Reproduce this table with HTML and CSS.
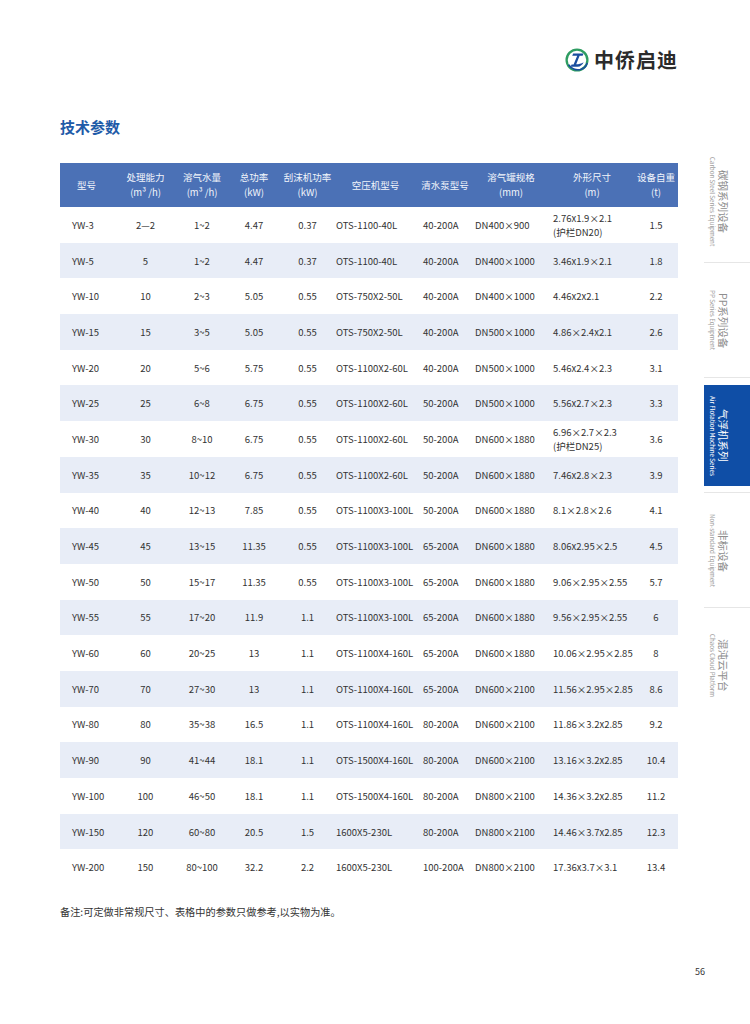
FILE: index.html
```html
<!DOCTYPE html>
<html lang="zh-CN">
<head>
<meta charset="utf-8">
<title>技术参数</title>
<link rel="stylesheet" href="styles.css">
</head>
<body>
<div class="page">
  <main class="main">
    <header class="brand">
      <svg class="brand-icon" width="24" height="24" viewBox="0 0 24 24" aria-hidden="true">
        <path d="M12 1.6 A10.4 10.4 0 1 0 22.4 12" fill="none" stroke="#2f9d62" stroke-width="2.3"/>
        <path d="M22.4 12 A10.4 10.4 0 0 0 12 1.6" fill="none" stroke="#2f9d62" stroke-width="2.3"/>
        <path d="M8.2 5.6 L18.6 5.6 L17.6 7.8 L14.6 7.8 L11.2 16.2 C13.6 16.2 16.4 15.6 18.6 14.2 C17.6 16.6 15.4 18.6 12.4 18.8 L5.6 18.8 L6.6 16.4 L8.6 16.4 L12.2 7.8 L7.2 7.8 Z" fill="#1a4d9e"/>
        <path d="M3.6 16.8 C6 20.6 11 22.6 15.6 21.4 C19 20.4 21.4 17.8 22.2 15" fill="none" stroke="#1a4d9e" stroke-width="1.6"/>
      </svg>
      <span class="brand-name">中侨启迪</span>
    </header>

    <h1 class="title">技术参数</h1>

    <table class="spec">
      <colgroup>
        <col class="w1"><col class="w2"><col class="w3"><col class="w4"><col class="w5">
        <col class="w6"><col class="w7"><col class="w8"><col class="w9"><col class="w10">
      </colgroup>
      <thead>
        <tr>
          <th>型号</th>
          <th>处理能力<br>(m³ /h)</th>
          <th>溶气水量<br>(m³ /h)</th>
          <th>总功率<br>(kW)</th>
          <th>刮沫机功率<br>(kW)</th>
          <th>空压机型号</th>
          <th>清水泵型号</th>
          <th>溶气罐规格<br>(mm)</th>
          <th>外形尺寸<br>(m)</th>
          <th>设备自重<br>(t)</th>
        </tr>
      </thead>
      <tbody>
        <tr><td class="c1">YW-3</td><td>2—2</td><td>1~2</td><td>4.47</td><td>0.37</td><td class="l3">OTS-1100-40L</td><td class="l5">40-200A</td><td class="l3">DN400×900</td><td class="l3">2.76x1.9×2.1<br>(护栏DN20)</td><td>1.5</td></tr>
        <tr><td class="c1">YW-5</td><td>5</td><td>1~2</td><td>4.47</td><td>0.37</td><td class="l3">OTS-1100-40L</td><td class="l5">40-200A</td><td class="l3">DN400×1000</td><td class="l3">3.46x1.9×2.1</td><td>1.8</td></tr>
        <tr><td class="c1">YW-10</td><td>10</td><td>2~3</td><td>5.05</td><td>0.55</td><td class="l3">OTS-750X2-50L</td><td class="l5">40-200A</td><td class="l3">DN400×1000</td><td class="l3">4.46x2x2.1</td><td>2.2</td></tr>
        <tr><td class="c1">YW-15</td><td>15</td><td>3~5</td><td>5.05</td><td>0.55</td><td class="l3">OTS-750X2-50L</td><td class="l5">40-200A</td><td class="l3">DN500×1000</td><td class="l3">4.86×2.4x2.1</td><td>2.6</td></tr>
        <tr><td class="c1">YW-20</td><td>20</td><td>5~6</td><td>5.75</td><td>0.55</td><td class="l3">OTS-1100X2-60L</td><td class="l5">40-200A</td><td class="l3">DN500×1000</td><td class="l3">5.46x2.4×2.3</td><td>3.1</td></tr>
        <tr><td class="c1">YW-25</td><td>25</td><td>6~8</td><td>6.75</td><td>0.55</td><td class="l3">OTS-1100X2-60L</td><td class="l5">50-200A</td><td class="l3">DN500×1000</td><td class="l3">5.56x2.7×2.3</td><td>3.3</td></tr>
        <tr><td class="c1">YW-30</td><td>30</td><td>8~10</td><td>6.75</td><td>0.55</td><td class="l3">OTS-1100X2-60L</td><td class="l5">50-200A</td><td class="l3">DN600×1880</td><td class="l3">6.96×2.7×2.3<br>(护栏DN25)</td><td>3.6</td></tr>
        <tr><td class="c1">YW-35</td><td>35</td><td>10~12</td><td>6.75</td><td>0.55</td><td class="l3">OTS-1100X2-60L</td><td class="l5">50-200A</td><td class="l3">DN600×1880</td><td class="l3">7.46x2.8×2.3</td><td>3.9</td></tr>
        <tr><td class="c1">YW-40</td><td>40</td><td>12~13</td><td>7.85</td><td>0.55</td><td class="l3">OTS-1100X3-100L</td><td class="l5">50-200A</td><td class="l3">DN600×1880</td><td class="l3">8.1×2.8×2.6</td><td>4.1</td></tr>
        <tr><td class="c1">YW-45</td><td>45</td><td>13~15</td><td>11.35</td><td>0.55</td><td class="l3">OTS-1100X3-100L</td><td class="l5">65-200A</td><td class="l3">DN600×1880</td><td class="l3">8.06x2.95×2.5</td><td>4.5</td></tr>
        <tr><td class="c1">YW-50</td><td>50</td><td>15~17</td><td>11.35</td><td>0.55</td><td class="l3">OTS-1100X3-100L</td><td class="l5">65-200A</td><td class="l3">DN600×1880</td><td class="l3">9.06×2.95×2.55</td><td>5.7</td></tr>
        <tr><td class="c1">YW-55</td><td>55</td><td>17~20</td><td>11.9</td><td>1.1</td><td class="l3">OTS-1100X3-100L</td><td class="l5">65-200A</td><td class="l3">DN600×1880</td><td class="l3">9.56×2.95×2.55</td><td>6</td></tr>
        <tr><td class="c1">YW-60</td><td>60</td><td>20~25</td><td>13</td><td>1.1</td><td class="l3">OTS-1100X4-160L</td><td class="l5">65-200A</td><td class="l3">DN600×1880</td><td class="l3">10.06×2.95×2.85</td><td>8</td></tr>
        <tr><td class="c1">YW-70</td><td>70</td><td>27~30</td><td>13</td><td>1.1</td><td class="l3">OTS-1100X4-160L</td><td class="l5">65-200A</td><td class="l3">DN600×2100</td><td class="l3">11.56×2.95×2.85</td><td>8.6</td></tr>
        <tr><td class="c1">YW-80</td><td>80</td><td>35~38</td><td>16.5</td><td>1.1</td><td class="l3">OTS-1100X4-160L</td><td class="l5">80-200A</td><td class="l3">DN600×2100</td><td class="l3">11.86×3.2x2.85</td><td>9.2</td></tr>
        <tr><td class="c1">YW-90</td><td>90</td><td>41~44</td><td>18.1</td><td>1.1</td><td class="l3">OTS-1500X4-160L</td><td class="l5">80-200A</td><td class="l3">DN600×2100</td><td class="l3">13.16×3.2x2.85</td><td>10.4</td></tr>
        <tr><td class="c1">YW-100</td><td>100</td><td>46~50</td><td>18.1</td><td>1.1</td><td class="l3">OTS-1500X4-160L</td><td class="l5">80-200A</td><td class="l3">DN800×2100</td><td class="l3">14.36×3.2x2.85</td><td>11.2</td></tr>
        <tr><td class="c1">YW-150</td><td>120</td><td>60~80</td><td>20.5</td><td>1.5</td><td class="l3">1600X5-230L</td><td class="l5">80-200A</td><td class="l3">DN800×2100</td><td class="l3">14.46×3.7x2.85</td><td>12.3</td></tr>
        <tr><td class="c1">YW-200</td><td>150</td><td>80~100</td><td>32.2</td><td>2.2</td><td class="l3">1600X5-230L</td><td class="l5">100-200A</td><td class="l3">DN800×2100</td><td class="l3">17.36x3.7×3.1</td><td>13.4</td></tr>
      </tbody>
    </table>

    <p class="note">备注:可定做非常规尺寸、表格中的参数只做参考,以实物为准。</p>
  </main>

  <nav class="side">
    <div class="tab first"><div class="tab-box"><span class="zh">碳钢系列设备</span><span class="en">Carbon Steel Series Equipment</span></div></div>
    <div class="tab"><div class="tab-box"><span class="zh">PP系列设备</span><span class="en">PP Series Equipment</span></div></div>
    <div class="tab"><div class="tab-box active"><span class="zh">气浮机系列</span><span class="en">Air Flotation Machine Series</span></div></div>
    <div class="tab"><div class="tab-box"><span class="zh">非标设备</span><span class="en">Non-standard Equipment</span></div></div>
    <div class="tab"><div class="tab-box"><span class="zh">混沌云平台</span><span class="en">Chaos Cloud Platform</span></div></div>
  </nav>

  <footer class="footer">56</footer>
</div>
</body>
</html>
```

FILE: styles.css
```css
* { box-sizing: border-box; }

html, body {
  margin: 0;
  padding: 0;
  background: #ffffff;
}

body {
  font-family: "Noto Sans CJK SC", "Noto Sans", "Liberation Sans", sans-serif;
  color: #333333;
}

.page {
  width: 750px;
  display: grid;
  grid-template-columns: 704px 46px;
  grid-template-rows: auto auto;
}

.main {
  padding: 48px 26px 0 60px;
}

.brand {
  display: flex;
  justify-content: flex-end;
  align-items: center;
  gap: 5px;
  height: 24px;
}

.brand-icon {
  display: block;
  flex: none;
}

.brand-name {
  font-size: 20px;
  line-height: 24px;
  font-weight: 700;
  color: #2b2b2b;
  letter-spacing: 1px;
}

.title {
  margin: 45px 0 0;
  font-size: 15px;
  line-height: 20px;
  font-weight: 700;
  color: #1f5ba8;
}

.spec {
  margin-top: 26px;
  width: 618px;
  border-collapse: collapse;
  table-layout: fixed;
  font-size: 9.5px;
}

.w1 { width: 53px; }
.w2 { width: 65px; }
.w3 { width: 48px; }
.w4 { width: 56px; }
.w5 { width: 51px; }
.w6 { width: 85px; }
.w7 { width: 54px; }
.w8 { width: 78px; }
.w9 { width: 84px; }
.w10 { width: 44px; }

.spec th {
  height: 44px;
  padding: 0;
  background: #4b71b6;
  color: #f2f5fb;
  font-weight: 400;
  line-height: 15px;
  text-align: center;
  vertical-align: middle;
  white-space: nowrap;
}

.spec td {
  height: 35.7px;
  padding: 0;
  line-height: 14px;
  text-align: center;
  vertical-align: middle;
  color: #333333;
  white-space: nowrap;
}

.spec tbody tr:nth-child(even) {
  background: #e8edf7;
}

.spec td.c1 { text-align: left; padding-left: 12px; }
.spec td.l3 { text-align: left; padding-left: 3px; }
.spec td.l5 { text-align: left; padding-left: 5px; }

.note {
  margin: 20px 0 0;
  font-size: 10.2px;
  line-height: 14px;
  color: #333333;
}

.side {
  padding-top: 147px;
  display: flex;
  flex-direction: column;
}

.tab {
  height: 115px;
  border-top: 1px solid #e6e6e6;
  padding: 7px 0 6px;
  display: flex;
}

.tab.first {
  border-top-color: transparent;
  padding-bottom: 14px;
}

.tab-box {
  flex: 1;
  display: flex;
  flex-direction: column;
  justify-content: center;
  align-items: center;
  padding-right: 16px;
  writing-mode: vertical-rl;
  text-orientation: sideways;
}

.tab-box.active {
  background: #0f4ea6;
}

.zh {
  font-size: 10.5px;
  line-height: 13px;
  color: #8e8e8e;
  white-space: nowrap;
}

.en {
  font-size: 6.2px;
  line-height: 9px;
  color: #a0a0a0;
  white-space: nowrap;
}

.tab-box.active .zh,
.tab-box.active .en {
  color: #ffffff;
}

.footer {
  grid-column: 1 / 3;
  margin-top: 47px;
  padding-right: 45px;
  text-align: right;
  font-size: 9px;
  line-height: 12px;
  color: #333333;
}
```
